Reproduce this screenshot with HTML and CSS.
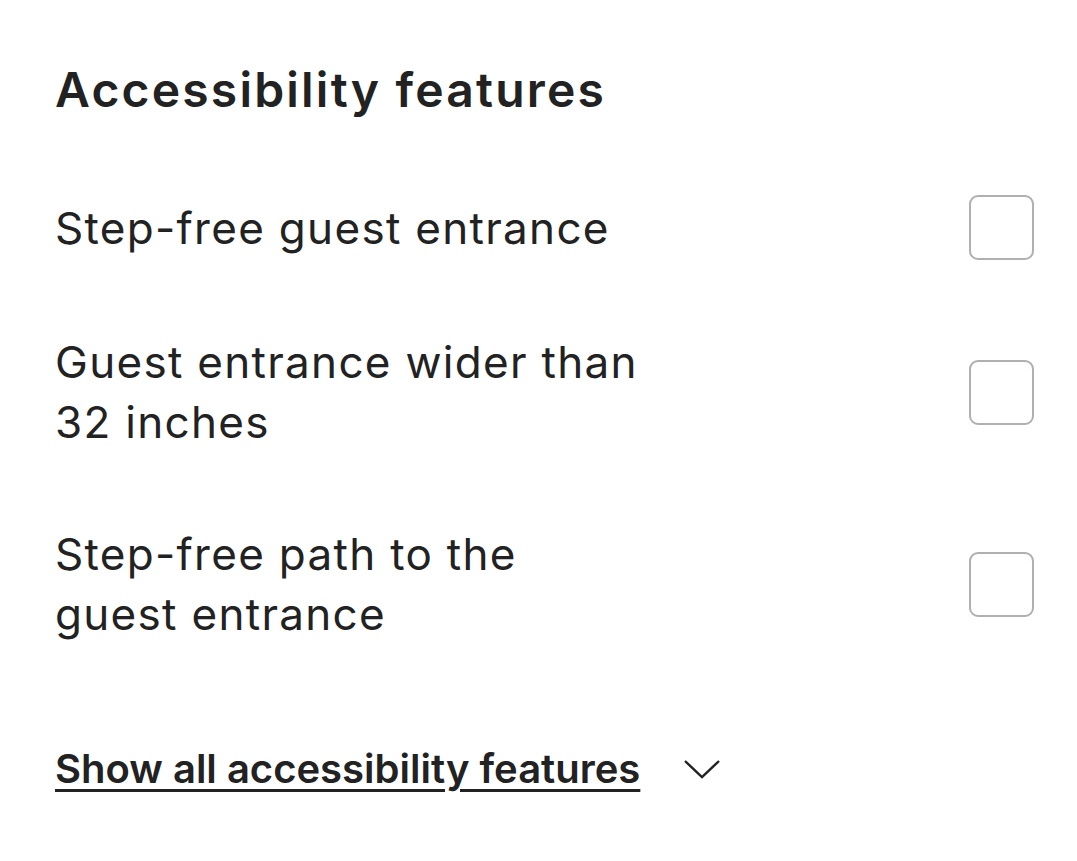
FILE: index.html
```html
<!DOCTYPE html>
<html lang="en">
<head>
  <meta charset="UTF-8" />
  <meta name="viewport" content="width=device-width, initial-scale=1.0"/>
  <title>Accessibility features</title>
  <link rel="stylesheet" href="styles.css">
</head>
<body>
  <section class="panel">
    <h2 class="title">Accessibility features</h2>

    <ul class="features">
      <li class="feature">
        <label for="f1">Step-free guest entrance</label>
        <input type="checkbox" id="f1" class="box" />
      </li>
      <li class="feature">
        <label for="f2">Guest entrance wider than 32 inches</label>
        <input type="checkbox" id="f2" class="box" />
      </li>
      <li class="feature">
        <label for="f3">Step-free path to the guest entrance</label>
        <input type="checkbox" id="f3" class="box" />
      </li>
    </ul>

    <button type="button" class="show-all">
      <span>Show all accessibility features</span>
      <svg class="chevron" viewBox="0 0 36 20" width="36" height="20" aria-hidden="true">
        <path d="M1 2 L18 18 L35 2" fill="none" stroke="#222" stroke-width="2.4" />
      </svg>
    </button>
  </section>
</body>
</html>
```

FILE: styles.css
```css
body {
  margin: 0;
  background: #fff;
  color: #222;
  font-family: Inter, "Noto Sans", sans-serif;
}
.panel {
  padding: 58px 43px 40px 55px;
}
.title {
  margin: 0;
  font-size: 48px;
  font-weight: 600;
  line-height: 64px;
  letter-spacing: 2.2px;
}
.features {
  list-style: none;
  margin: 37px 0 0;
  padding: 0;
}
.feature {
  display: flex;
  align-items: center;
  justify-content: space-between;
  padding: 36px 0;
}
.feature label {
  max-width: 590px;
  font-size: 44px;
  line-height: 60px;
  letter-spacing: 1.3px;
}
.box {
  appearance: none;
  box-sizing: border-box;
  width: 65px;
  height: 65px;
  margin: 0;
  border: 2px solid #b0b0b0;
  border-radius: 9px;
  background: #fff;
  flex-shrink: 0;
}
.show-all {
  display: flex;
  align-items: center;
  gap: 44px;
  margin-top: 64px;
  padding: 0;
  border: 0;
  background: none;
  color: #222;
  font-family: inherit;
  font-size: 40px;
  font-weight: 600;
}
.show-all span {
  text-decoration: underline;
  text-decoration-thickness: 3px;
  text-underline-offset: 6px;
}
```
